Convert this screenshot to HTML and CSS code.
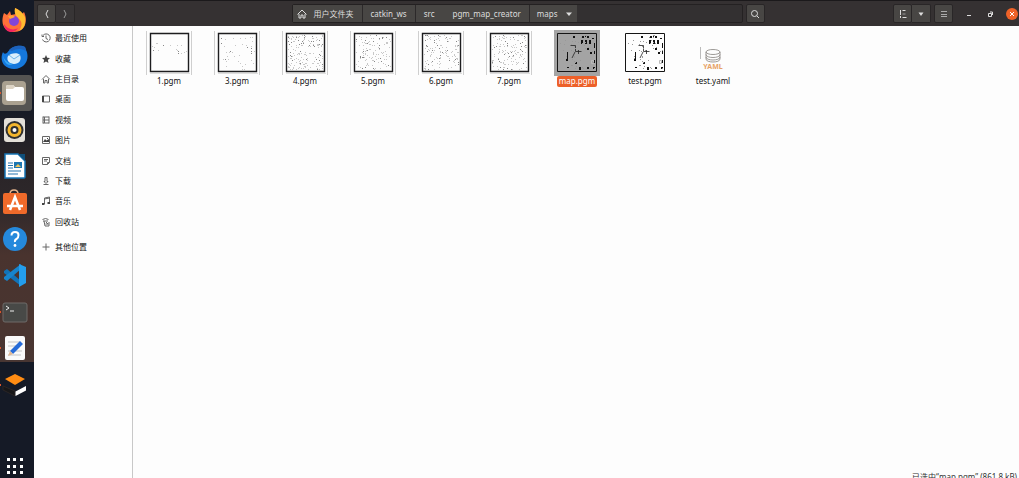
FILE: index.html
```html
<!DOCTYPE html>
<html lang="zh-CN">
<head>
<meta charset="utf-8">
<title>maps</title>
<link rel="stylesheet" href="styles.css">
</head>
<body>
<nav class="dock" aria-label="Dock">
  <div class="dock-apps">
    <button class="app" aria-label="Firefox"><svg viewBox="0 0 28 28"><path d="M4 7l3 2 3-4 1 4 5-1-1-6c3 1 5 3 7 6l2-2c4 8 2 20-10 20C4 26 0 17 4 7z" fill="#ff7139"/><path d="M15 2c5 2 8 5 10 9 1 7-1 12-6 14 4-6 3-10-1-13-3-3-4-6-3-10z" fill="#ffbd2f"/><path d="M4 18c3 5 9 7 14 4-2 4-6 4-8 4-4-1-6-4-6-8z" fill="#f3265f"/><circle cx="14" cy="15" r="5" fill="#8145d8"/><path d="M8 10c3-1 5-1 7 1l-5 2z" fill="#ffa436"/></svg></button>
    <button class="app" aria-label="Thunderbird"><svg viewBox="0 0 28 28"><path d="M3 9c1 2 2 2 4 1C11 3 20 1 25 4l1 3c4 8 0 19-12 19C4 26-1 18 3 9z" fill="#1578dc"/><path d="M9 7c5-5 11-5 16-3l1 4c-6-3-10-2-14 0z" fill="#1d62bd"/><path d="M8 13c2-3 10-4 12-1 2 5-1 9-6 9s-8-4-6-8z" fill="#d9eefb"/><path d="M9 12l5 4 6-4" fill="none" stroke="#6fb4e8"/><path d="M3 12c1 5 4 8 10 9-5 3-9-1-10-9z" fill="#35a8f5"/></svg></button>
    <button class="app active running" aria-label="文件"><svg viewBox="0 0 28 28"><rect x="2" y="2" width="24" height="24" rx="4" fill="#aaa190"/><path d="M6 8q0-2 2-2h5l2 2h7q2 0 2 2v10q0 2-2 2H8q-2 0-2-2z" fill="#fff"/><path d="M6 8q0-2 2-2h5l2 2-2 2H6z" fill="#ddd4c5"/></svg></button>
    <button class="app" aria-label="Rhythmbox"><svg viewBox="0 0 28 28"><rect x="4" y="2" width="21" height="24" rx="3" fill="#e3dfd8"/><circle cx="14.500" cy="14" r="9" fill="#303030"/><circle cx="14.500" cy="14" r="5.500" fill="none" stroke="#f4b62d" stroke-width="3"/><circle cx="14.500" cy="14" r="2" fill="#fff"/></svg></button>
    <button class="app" aria-label="Writer"><svg viewBox="0 0 28 28"><path d="M5 2h13l7 7v16q0 1-1 1H5z" fill="#fff" stroke="#1775b5" stroke-width="1.500"/><path d="M18 2h7v7z" fill="#104e78"/><path d="M8 11h5M8 13.500h5M8 16h5M8 19h13M8 22h10" stroke="#2475b0" stroke-width="1.200"/><path d="M14 10h8v6h-8z" fill="#1e77b2"/><path d="M15 15l3-3 3 3z" fill="#f2c65b"/></svg></button>
    <button class="app" aria-label="Ubuntu Software"><svg viewBox="0 0 28 28"><path d="M10 6q0-4 4-4t4 4" fill="none" stroke="#e6b58e" stroke-width="1.500"/><rect x="3" y="5" width="24" height="21" rx="2" fill="#f06a2a"/><path d="M10 22l5-13 5 13M7 18h16" fill="none" stroke="#fff" stroke-width="2.500"/></svg></button>
    <button class="app" aria-label="帮助"><svg viewBox="0 0 28 28"><circle cx="15" cy="14" r="12" fill="#2589dc"/><path d="M11.500 10.500q0-3.500 3.500-3.500t3.500 3-2 4-1.500 3" fill="none" stroke="#fff" stroke-width="2"/><circle cx="15" cy="20.500" r="1.400" fill="#fff"/></svg></button>
    <button class="app" aria-label="Visual Studio Code"><svg viewBox="0 0 28 28"><path d="M4 10l3-2 14 12v5L4 12z" fill="#1273b8"/><path d="M4 18l3 2L21 8V3L4 16z" fill="#1784cc"/><path d="M19 3l7 3v16l-7 4z" fill="#249eed"/></svg></button>
    <button class="app running" aria-label="终端"><svg viewBox="0 0 28 28"><rect x="3" y="5" width="24" height="19" rx="2" fill="#484947" stroke="#6e6b69"/><path d="M6 8l3 2-3 2M10 13h4" fill="none" stroke="#eee"/></svg></button>
    <button class="app running" aria-label="文本编辑器"><svg viewBox="0 0 28 28"><rect x="5" y="2" width="20" height="24" rx="2" fill="#fafafa"/><path d="M8 8h12M8 12h12M8 17h14M8 21h13" stroke="#c4c4c4"/><path d="M10 17L20 7l3 3-10 10z" fill="#266bd8"/><path d="M10 17l3 3-5 2z" fill="#e1b894"/></svg></button>
    <button class="app running" aria-label="Gazebo"><svg viewBox="0 0 28 28"><path d="M5 8l10-5 10 5-10 6z" fill="#ff8c13"/><path d="M3 15v4l12 6v-5z" fill="#171719" stroke="#2b2524"/><path d="M15.500 20.500L26 15v4.500l-10.500 5.500z" fill="#fff"/></svg></button>
  </div>
  <button class="app launcher" aria-label="显示应用程序"><svg viewBox="0 0 28 28"><path d="M7 6h3v3H7zm6 0h3v3h-3zm7 0h3v3h-3zM7 13h3v3H7zm6 0h3v3h-3zm7 0h3v3h-3zM7 19h3v3H7zm6 0h3v3h-3zm7 0h3v3h-3z" fill="#fff"/></svg></button>
</nav>

<div class="window">
  <header class="titlebar">
    <div class="group">
      <button class="tool" aria-label="后退"><svg viewBox="0 0 12 12"><path d="M7 2L5 6l2 4"/></svg></button>
      <button class="tool dim" aria-label="前进"><svg viewBox="0 0 12 12"><path d="M5 2l2 4-2 4"/></svg></button>
    </div>
    <div class="location">
      <div class="path">
        <button class="crumb home"><svg viewBox="0 0 12 12"><path d="M1.500 6.500L6 2l4.500 4.500M3 6v4h2V7h2v3h2V6"/></svg>用户文件夹</button>
        <button class="crumb">catkin_ws</button>
        <button class="crumb joined">src</button>
        <button class="crumb">pgm_map_creator</button>
        <button class="crumb last">maps<svg viewBox="0 0 12 12"><path class="solid" d="M3 4.500h6L6 8z"/></svg></button>
      </div>
      <button class="tool" aria-label="搜索"><svg viewBox="0 0 12 12"><circle cx="5.500" cy="5.500" r="3"/><path d="M8 8l2 2"/></svg></button>
    </div>
    <div class="actions">
      <div class="group">
        <button class="tool" aria-label="列表视图"><svg viewBox="0 0 12 12"><path d="M3.500 2v5M3.500 8v2M5.500 2.500h3M5.500 9.500h4"/><path d="M5.500 6h3" stroke="#999"/></svg></button>
        <button class="tool" aria-label="视图选项"><svg viewBox="0 0 12 12"><path class="solid" d="M3.500 4.500h5L6 8z"/></svg></button>
      </div>
      <button class="tool" aria-label="菜单"><svg viewBox="0 0 12 12"><path d="M3 3.500h6M3 6.500h6M3 8.500h6" stroke="#aaa"/></svg></button>
      <div class="controls">
        <button class="control" aria-label="最小化"><svg viewBox="0 0 12 12"><path d="M4 7.500h4"/></svg></button>
        <button class="control" aria-label="还原"><svg viewBox="0 0 12 12"><path d="M4.500 5.500h3v3h-3zM6 4h2.500v3"/></svg></button>
        <button class="control close" aria-label="关闭"><svg viewBox="0 0 12 12"><path d="M4 4l4 4M8 4l-4 4"/></svg></button>
      </div>
    </div>
  </header>

  <div class="content">
    <aside class="sidebar">
      <div class="places">
        <a class="place" href="#"><svg viewBox="0 0 10 10"><path d="M2 2.500a4 4 0 1 1-.5 4M5 2.500V5.500l2 1M1 1.500v2h2"/></svg>最近使用</a>
        <a class="place" href="#"><svg viewBox="0 0 10 10"><path class="solid" d="M5 1l1.200 2.800L9 4 6.800 6l.7 3L5 7.500 2.500 9l.7-3L1 4l2.800-.2z"/></svg>收藏</a>
        <a class="place" href="#"><svg viewBox="0 0 10 10"><path d="M1 5.500l4-4 4 4M2.500 5v4H4V6.500h2V9h1.500V5"/></svg>主目录</a>
        <a class="place" href="#"><svg viewBox="0 0 10 10"><path d="M1.500 2h7v6h-7z"/><path class="solid" d="M1 2h2v6H1z"/></svg>桌面</a>
        <a class="place" href="#"><svg viewBox="0 0 10 10"><path d="M2 1.500v7M8 1.500v7M2 2h6M2 5h6M2 8h6M3.500 2v6"/></svg>视频</a>
        <a class="place" href="#"><svg viewBox="0 0 10 10"><path d="M1.500 1.500h7v7h-7z"/><path class="solid" d="M2 7l2-3 1.500 1.500L8 4v3zM6 3h1v1H6z"/></svg>图片</a>
        <a class="place" href="#"><svg viewBox="0 0 10 10"><path d="M1.500 1.500h7v5l-2 2h-5zM3 3.500h4M3 5h3M6.500 8.500v-2h2"/></svg>文档</a>
        <a class="place" href="#"><svg viewBox="0 0 10 10"><path d="M4 1.500v4H3l2 2 2-2H6v-4zM2.500 8.500h5"/></svg>下载</a>
        <a class="place" href="#"><svg viewBox="0 0 10 10"><path d="M3.500 8V2l5-1v6M3.500 3l5-1"/><path class="solid" d="M1 7h2.500v2H1zM6.500 6H9v2H6.500z"/></svg>音乐</a>
        <a class="place" href="#"><svg viewBox="0 0 10 10"><path d="M1.500 2.500l3-1 3 1M2 4h5M3 4l1 5h4V5M5 5l2 2M4.500 7h3"/></svg>回收站</a>
      </div>
      <a class="place" href="#"><svg viewBox="0 0 10 10"><path d="M5 1.500v7M1.500 5h7"/></svg>其他位置</a>
    </aside>
    <main class="files">
      <button class="file"><svg class="thumb" data-dots="16" data-low="12" data-high="24" viewBox="0 0 46 46"></svg><span>1.pgm</span></button>
      <button class="file"><svg class="thumb" data-dots="38" data-low="7" data-high="40" viewBox="0 0 46 46"></svg><span>3.pgm</span></button>
      <button class="file"><svg class="thumb" data-dots="170" data-low="5" data-high="40" viewBox="0 0 46 46"></svg><span>4.pgm</span></button>
      <button class="file"><svg class="thumb" data-dots="120" data-low="5" data-high="40" viewBox="0 0 46 46"></svg><span>5.pgm</span></button>
      <button class="file"><svg class="thumb" data-dots="135" data-low="5" data-high="40" viewBox="0 0 46 46"></svg><span>6.pgm</span></button>
      <button class="file"><svg class="thumb" data-dots="140" data-low="5" data-high="40" viewBox="0 0 46 46"></svg><span>7.pgm</span></button>
      <button class="file selected"><svg class="thumb" viewBox="0 0 46 46"><use href="#floor"/></svg><span>map.pgm</span></button>
      <button class="file"><svg class="thumb" viewBox="0 0 46 46"><g id="floor"><path d="M3.500 3.500h39v38h-39z" fill="none" stroke="#151515"/><path d="M19 6h2v2h-2zM28 6h2v2h-2zM31 6h1v2h-1zM33 6h2v2h-2zM27 10h2v4h-2zM31 10h2v4h-2zM35 10h2v4h-2zM33 18h2v2h-2zM40 13h1v5h-1zM40 20h1v4h-1zM36 22h2v2h-2zM13 22h1v9h-1zM12 29h2v2h-2zM25 37h2v3h-2zM21 32h2v2h-2zM33 37h2v2h-2zM40 30h1v3h-1zM13 37h2v1h-2zM38 8h2v1h-2zM39 37h2v2h-2z" fill="#111"/><path d="M16.500 15.500h5v6h6M24.500 20v4M21 22l-3 6" fill="none" stroke="#222" stroke-width=".8"/><path d="M37.500 30.500h2v3h-2z" fill="none" stroke="#bbb"/></g></svg><span>test.pgm</span></button>
      <button class="file"><svg class="thumb yaml" viewBox="0 0 46 46"><path d="M10.500 17v12" stroke="#bbb"/><g fill="none" stroke="#85817e" stroke-width=".8"><ellipse cx="23" cy="22" rx="7" ry="2.500"/><path d="M16 22v7c0 4 14 4 14 0v-7M16 24.500c0 4 14 4 14 0M16 27c0 4 14 4 14 0"/></g><text x="23" y="39" text-anchor="middle">YAML</text></svg><span>test.yaml</span></button>
    </main>
    <output class="status">已选中“map.pgm” (861.8 kB)</output>
  </div>
</div>
<script src="thumbs.js"></script>
</body>
</html>
```
FILE: styles.css
```css
* { box-sizing: border-box; }
body { margin: 0; height: 100vh; display: flex; overflow: hidden; background: #fdfdfd; font: 8px/12px "Noto Sans", "Noto Sans CJK SC", sans-serif; color: #111; }
button { margin: 0; padding: 0; border: 0; background: none; font: inherit; color: inherit; }
svg { display: block; flex: none; }
.solid { fill: currentColor; stroke: none; }

.dock { flex: 0 0 34px; display: flex; flex-direction: column; justify-content: space-between; padding: 2px 0 0; background: linear-gradient(#151a26 0 105px, #282326 155px, #2e282b 205px, #49332e 255px, #493632 362px, #151a26 362px); }
.dock-apps { flex: 0 1 401px; display: grid; grid-auto-rows: 1fr; }
.app { position: relative; display: flex; align-items: center; width: 32px; border-radius: 0 3px 3px 0; }
.app svg { width: 28px; height: 28px; }
.app.active { background: #555452; }
.app.running::before { content: ""; position: absolute; left: 0; width: 1px; height: 2px; background: #d9552b; }
.launcher { height: 28px; margin-bottom: -2px; }

.window { flex: 1; min-width: 0; display: flex; flex-direction: column; }
.titlebar { display: grid; grid-template-columns: 1fr minmax(0, 473px) 1fr; align-items: center; height: 26px; padding: 0 0 0 3px; border-top: 1px solid #1b191b; background: #353132; color: #ddd; }
.titlebar svg { width: 12px; height: 12px; fill: none; stroke: currentColor; }
.titlebar .solid { fill: currentColor; stroke: none; }
.group, .location, .path, .actions, .controls { display: flex; align-items: center; }
.tool { display: grid; place-items: center; width: 19px; height: 19px; background: #484644; border: 1px solid #292627; border-radius: 2px; }
.group .tool + .tool { border-left: 0; border-radius: 0 2px 2px 0; }
.tool.dim { background: #383536; color: #999; }
.location { gap: 3px; }
.path { flex: 1; height: 19px; border: 1px solid #242122; border-radius: 2px; background: #333031; }
.crumb { display: flex; align-items: center; height: 17px; padding: 0 8px; background: #484644; border-right: 1px solid #2c292a; }
.crumb.joined { border-right-color: #484644; padding-right: 9px; }
.home { padding-left: 3px; gap: 6px; }
.crumb.last { padding: 0 2px 0 7px; gap: 5px; border-right: 0; }
.actions { justify-content: flex-end; gap: 3px; }
.controls { gap: 9px; margin-left: 7px; }
.control { width: 12px; height: 12px; border-radius: 50%; }
.control.close { margin-left: 1px; margin-right: 1px; background: #ee6228; color: #fff; }

.content { position: relative; flex: 1; min-height: 0; display: flex; }
.sidebar { flex: 0 0 99px; padding: 2px 0; border-right: 1px solid #c8c8c8; background: #fefefe; }
.places { display: grid; grid-auto-rows: 1fr; height: 204px; margin-bottom: 5px; }
.place { display: flex; align-items: center; gap: 4px; min-height: 20px; padding-left: 7px; color: #111; text-decoration: none; }
.place svg { width: 10px; height: 10px; fill: none; stroke: #666; stroke-width: 1; color: #444; }
.place .solid { fill: currentColor; stroke: none; }

.files { flex: 1; display: grid; grid-template-columns: repeat(auto-fill, 68px); align-content: start; padding: 4px 2px; }
.file { display: flex; flex-direction: column; align-items: center; }
.thumb { width: 46px; height: 46px; }
.file span { height: 11px; padding: 0 2px; line-height: 10px; border-radius: 2px; }
.selected .thumb { background: #a4a4a4; }
.selected span { background: #ed6029; color: #fff; }
.yaml text { font: bold 7px "Noto Sans", sans-serif; fill: #e7a265; }
.status { position: absolute; right: 2px; bottom: -6px; line-height: 14px; color: #333; white-space: nowrap; }
```
FILE: thumbs.js
```js
// Draws framed occupancy-map previews with scattered obstacles.
const NS = "http://www.w3.org/2000/svg";
function add(svg, d, attrs) {
  const p = document.createElementNS(NS, "path");
  p.setAttribute("d", d);
  for (const k in attrs) p.setAttribute(k, attrs[k]);
  svg.append(p);
}
let seed = 41;
function random() {
  seed = (seed * 16807) % 2147483647;
  return seed / 2147483647;
}
function scatter(svg, count, low, high, fill) {
  let d = "";
  for (let i = 0; i < count; i++) {
    const x = 6 + Math.floor(random() * 35);
    const y = low + Math.floor(random() * (high - low));
    d += `M${x} ${y}h1v1h-1z`;
  }
  add(svg, d, { fill });
}
document.querySelectorAll("[data-dots]").forEach((svg) => {
  const n = Number(svg.dataset.dots);
  const low = Number(svg.dataset.low);
  const high = Number(svg.dataset.high);
  add(svg, "M.5 1v44M45.5 1v44", { stroke: "#cfcfcf" });
  add(svg, "M4 43.5h40", { stroke: "#dedede" });
  scatter(svg, n * 0.8, low, high, "#c8c8c8");
  scatter(svg, n * 0.2, low, high, "#888");
  add(svg, "M4.500 3.500h38v38h-38z", { fill: "none", stroke: "#1d1d1f", "stroke-width": 1.4 });
});
scatter(document.querySelector("#floor"), 45, 5, 40, "#999");
```
